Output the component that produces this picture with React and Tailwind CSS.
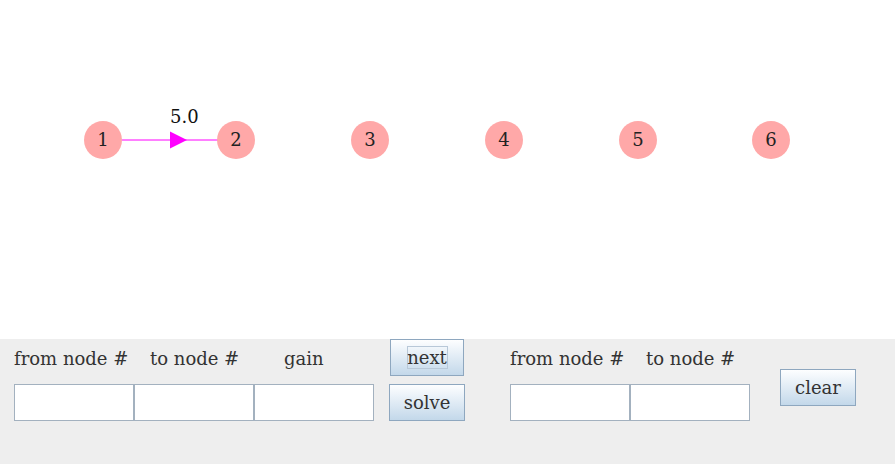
const nodes = [
  { id: 1, x: 103 },
  { id: 2, x: 236 },
  { id: 3, x: 370 },
  { id: 4, x: 504 },
  { id: 5, x: 638 },
  { id: 6, x: 771 },
];

function Btn({ children, focus, className = "" }) {
  return (
    <button
      className={
        "h-[37px] border border-[#8ea7bf] bg-gradient-to-b from-[#fdfeff] to-[#c3d8ea] text-[#333] flex items-center justify-center " +
        className
      }
    >
      <span
        className={
          focus
            ? "border border-[#b8c8d8] w-[41px] h-[23px] flex items-center justify-center leading-[19px]"
            : "leading-[19px]"
        }
      >
        {children}
      </span>
    </button>
  );
}

function Field({ className = "" }) {
  return <div className={"w-[120px] h-[37px] bg-white border border-[#a3b1bf] " + className} />;
}

export default function App() {
  return (
    <div className="w-[895px] h-[464px] flex flex-col bg-white text-[18px] font-['DejaVu_Serif',serif] overflow-hidden">
      {/* graph canvas */}
      <div className="relative h-[339px] bg-white">
        <svg className="absolute left-0 top-0" width="895" height="339">
          <line x1="122" y1="140" x2="218" y2="140" stroke="#ff00ff" strokeWidth="1" />
          <polygon points="170,131.5 187,140 170,148.5" fill="#ff00ff" />
        </svg>
        <div className="absolute left-[170px] top-[107px] text-[#111] leading-[20px]">5.0</div>
        {nodes.map((n) => (
          <div
            key={n.id}
            className="absolute top-[121px] w-[38px] h-[38px] rounded-full bg-[#ffa8a8] flex items-center justify-center text-[#222] leading-none"
            style={{ left: n.x - 19 }}
          >
            {n.id}
          </div>
        ))}
      </div>

      {/* control panel */}
      <div className="flex-1 bg-[#eeeeee] flex items-start pl-[14px] text-[#333]">
        <div className="flex flex-col w-[360px]">
          <div className="h-[45px] flex items-center pb-[6px]">
            <span className="w-[136px]">from node #</span>
            <span className="w-[134px]">to node #</span>
            <span>gain</span>
          </div>
          <div className="flex">
            <Field />
            <Field />
            <Field />
          </div>
        </div>
        <div className="flex flex-col ml-[15px] gap-[8px]">
          <Btn focus className="w-[74px] ml-[1px]">next</Btn>
          <Btn className="w-[76px]">solve</Btn>
        </div>
        <div className="flex flex-col ml-[45px] w-[240px]">
          <div className="h-[45px] flex items-center pb-[6px]">
            <span className="w-[136px]">from node #</span>
            <span>to node #</span>
          </div>
          <div className="flex">
            <Field />
            <Field />
          </div>
        </div>
        <Btn className="w-[76px] mt-[30px] ml-[30px]">clear</Btn>
      </div>
    </div>
  );
}
